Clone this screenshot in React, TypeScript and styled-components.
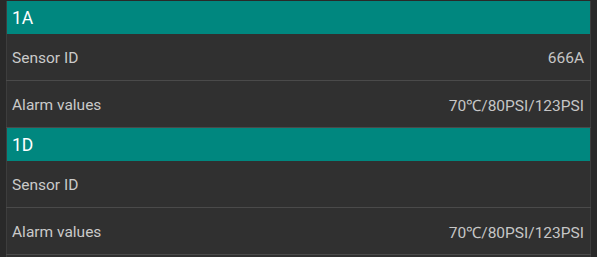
import React from 'react';
import styled, { createGlobalStyle } from 'styled-components';

type Sensor = {
  wheel: string;
  sensorId: string;
  alarm: string;
};

const SENSORS: Sensor[] = [
  { wheel: '1A', sensorId: '666A', alarm: '70℃/80PSI/123PSI' },
  { wheel: '1D', sensorId: '', alarm: '70℃/80PSI/123PSI' },
];

const App = () => {
  return (
    <>
      <GlobalStyle />
      <Screen>
        <List>
          {SENSORS.map((s) => (
            <Section key={s.wheel}>
              <Header>{s.wheel}</Header>
              <Row>
                <Label>Sensor ID</Label>
                <Value>{s.sensorId}</Value>
              </Row>
              <Row>
                <Label>Alarm values</Label>
                <Value>{s.alarm}</Value>
              </Row>
            </Section>
          ))}
        </List>
      </Screen>
    </>
  );
};

export default App;

const GlobalStyle = createGlobalStyle`
  html, body {
    margin: 0;
    padding: 0;
    background-color: #292929;
  }

  * {
    box-sizing: border-box;
  }
`;

const Screen = styled.div`
  width: 597px;
  height: 257px;
  padding: 1px 6px 0;
  background-color: #292929;
  font-family: Roboto, 'Liberation Sans', sans-serif;
  overflow: hidden;
`;

const List = styled.div`
  height: 100%;
  display: flex;
  flex-direction: column;
  border-left: 1px solid #3d3d3d;
  border-right: 1px solid #3d3d3d;
  background-color: #303030;
`;

const Section = styled.section`
  display: flex;
  flex-direction: column;
`;

const Header = styled.div`
  height: 33px;
  display: flex;
  align-items: center;
  padding: 1px 0 0 5px;
  background-color: #00877f;
  color: #ffffff;
  font-size: 17.5px;
`;

const Row = styled.div`
  height: 47px;
  display: flex;
  align-items: center;
  justify-content: space-between;
  margin: 0 -1px;
  padding: 2px 7px 0 6px;
  border-bottom: 1px solid #4a4a4a;
`;

const Label = styled.span`
  color: #cacaca;
  font-size: 15.5px;
`;

const Value = styled.span`
  color: #c6c6c6;
  font-size: 15.5px;
`;
